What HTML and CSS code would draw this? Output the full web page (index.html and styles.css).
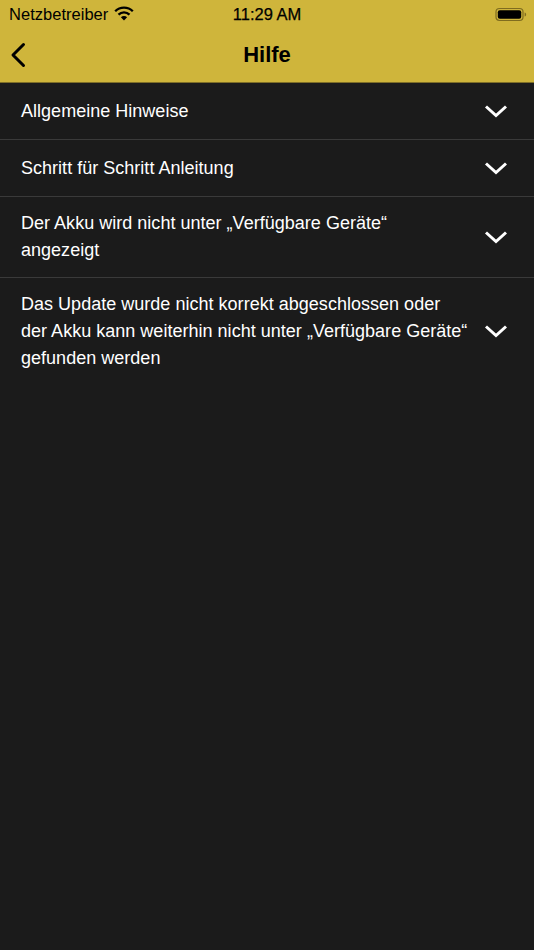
FILE: index.html
```html
<!DOCTYPE html>
<html lang="de">
<head>
<meta charset="utf-8">
<title>Hilfe</title>
<link rel="stylesheet" href="styles.css">
</head>
<body>
<header class="top">
  <div class="status">
    <div class="status-left">
      <span class="carrier">Netzbetreiber</span>
      <svg class="wifi" width="20" height="15" viewBox="0 0 20 15"><path d="M10 14.500 6.900 11.200a4.400 4.400 0 0 1 6.200 0Z" fill="#000"/><path d="M4.500 8.600a7.800 7.800 0 0 1 11 0" fill="none" stroke="#000" stroke-width="2.300"/><path d="M1.200 5.200a12.500 12.500 0 0 1 17.600 0" fill="none" stroke="#000" stroke-width="2.300"/></svg>
    </div>
    <span class="time">11:29 AM</span>
    <div class="status-right">
      <svg width="32" height="15" viewBox="0 0 32 15"><rect x="1" y="1.500" width="27" height="12" rx="3.400" fill="none" stroke="#7f6c1f" stroke-width="1.200"/><rect x="2.800" y="3.200" width="23.400" height="8.600" rx="2" fill="#000"/><path d="M29.600 5.500c1 .3 1.500 1 1.500 2s-.5 1.700-1.500 2Z" fill="#7f6c1f"/></svg>
    </div>
  </div>
  <div class="nav">
    <svg class="back" width="16" height="26" viewBox="0 0 16 26"><path d="M13.500 2.500 3 13l10.500 10.500" fill="none" stroke="#000" stroke-width="3" stroke-linecap="round" stroke-linejoin="round"/></svg>
    <h1 class="title">Hilfe</h1>
    <span></span>
  </div>
</header>
<main class="list">
  <div class="row row-one">
    <span class="label">Allgemeine Hinweise</span>
    <svg class="chev" width="24" height="14" viewBox="0 0 24 14"><path d="M2 2.500 12 11.500 22 2.500" fill="none" stroke="#fff" stroke-width="3"/></svg>
  </div>
  <div class="row row-one">
    <span class="label">Schritt für Schritt Anleitung</span>
    <svg class="chev" width="24" height="14" viewBox="0 0 24 14"><path d="M2 2.500 12 11.500 22 2.500" fill="none" stroke="#fff" stroke-width="3"/></svg>
  </div>
  <div class="row row-two">
    <span class="label">Der Akku wird nicht unter „Verfügbare Geräte“<br>angezeigt</span>
    <svg class="chev" width="24" height="14" viewBox="0 0 24 14"><path d="M2 2.500 12 11.500 22 2.500" fill="none" stroke="#fff" stroke-width="3"/></svg>
  </div>
  <div class="row row-three">
    <span class="label">Das Update wurde nicht korrekt abgeschlossen oder<br>der Akku kann weiterhin nicht unter „Verfügbare Geräte“<br>gefunden werden</span>
    <svg class="chev chev-up" width="24" height="14" viewBox="0 0 24 14"><path d="M2 2.500 12 11.500 22 2.500" fill="none" stroke="#fff" stroke-width="3"/></svg>
  </div>
</main>
</body>
</html>
```

FILE: styles.css
```css
* { box-sizing: border-box; }
html, body { margin: 0; padding: 0; }
body {
  width: 534px;
  height: 950px;
  overflow: hidden;
  background: #1b1b1b;
  font-family: "Liberation Sans", Arial, sans-serif;
  color: #fff;
}
.top {
  height: 83px;
  background: #cfb53b;
  border-bottom: 1px solid #7f6f28;
  color: #000;
}
.status {
  height: 28px;
  display: grid;
  grid-template-columns: 1fr auto 1fr;
  align-items: center;
  padding: 0 7px;
}
.status-left { display: flex; align-items: center; gap: 6px; padding-left: 2px; }
.status-right { display: flex; justify-content: flex-end; }
.carrier { font-size: 16.5px; letter-spacing: 0.02px; }
.time { font-size: 16.5px; font-weight: 400; -webkit-text-stroke: 0.25px #000; }
.wifi { margin-top: -2px; }
.nav {
  height: 54px;
  display: grid;
  grid-template-columns: 1fr auto 1fr;
  align-items: center;
  padding: 0 10px;
}
.title { margin: 0 0 1px; font-size: 22px; font-weight: 700; }
.list { display: flex; flex-direction: column; }
.row {
  display: flex;
  align-items: center;
  justify-content: space-between;
  padding: 0 26px 0 21px;
  border-bottom: 1px solid #3a3a3a;
}
.row:last-child { border-bottom: 0; }
.row-one { height: 57px; }
.row-two { height: 81px; }
.row-three { height: 107px; }
.label { font-size: 18px; line-height: 27px; letter-spacing: 0.02px; }
.chev { flex: none; }
.chev-up { margin-bottom: 2px; }
```
